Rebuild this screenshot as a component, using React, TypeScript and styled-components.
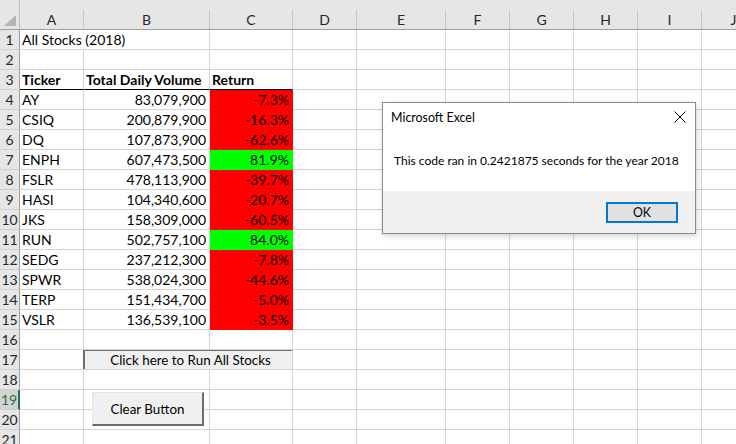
import React from 'react';
import styled, { createGlobalStyle } from 'styled-components';

const GlobalStyle = createGlobalStyle`
  body {
    margin: 0;
    background: #ffffff;
    overflow: hidden;
  }
`;

const CELL_FONT = `'Lato', 'Liberation Sans', sans-serif`;
const UI_FONT = `'Lato', 'Noto Sans', sans-serif`;

const cols = [
  { key: 'A', w: 64 },
  { key: 'B', w: 126 },
  { key: 'C', w: 83 },
  { key: 'D', w: 64 },
  { key: 'E', w: 89 },
  { key: 'F', w: 64 },
  { key: 'G', w: 64 },
  { key: 'H', w: 64 },
  { key: 'I', w: 64 },
  { key: 'J', w: 64 },
];

const stocks = [
  ['AY', '83,079,900', '-7.3%'],
  ['CSIQ', '200,879,900', '-16.3%'],
  ['DQ', '107,873,900', '-62.6%'],
  ['ENPH', '607,473,500', '81.9%'],
  ['FSLR', '478,113,900', '-39.7%'],
  ['HASI', '104,340,600', '-20.7%'],
  ['JKS', '158,309,000', '-60.5%'],
  ['RUN', '502,757,100', '84.0%'],
  ['SEDG', '237,212,300', '-7.8%'],
  ['SPWR', '538,024,300', '-44.6%'],
  ['TERP', '151,434,700', '-5.0%'],
  ['VSLR', '136,539,100', '-3.5%'],
];

const Sheet = styled.div`
  position: relative;
  width: 736px;
  height: 444px;
  overflow: hidden;
  font-family: ${CELL_FONT};
  font-size: 14px;
  color: #000;
`;

const HeaderRow = styled.div`
  display: flex;
  height: 30px;
  padding-top: 10px;
  box-sizing: border-box;
  background: #e6e6e6;
  border-bottom: 1px solid #9f9f9f;
`;

const Corner = styled.div`
  position: relative;
  flex: 0 0 20px;
  box-sizing: border-box;
  border-right: 1px solid #bdbdbd;
  margin-top: -10px;
`;

const CornerTriangle = styled.div`
  position: absolute;
  right: 3px;
  bottom: 3px;
  width: 0;
  height: 0;
  border-left: 12px solid transparent;
  border-bottom: 11px solid #b5b5b5;
`;

const ColHead = styled.div<{ $w: number }>`
  flex: 0 0 ${(p) => p.$w}px;
  min-width: 0;
  box-sizing: border-box;
  border-right: 1px solid #c6c6c6;
  display: flex;
  align-items: center;
  justify-content: center;
  color: #262626;
  font-size: 14px;
`;

const Row = styled.div`
  display: flex;
  height: 20px;
`;

const RowHead = styled.div<{ $active?: boolean }>`
  flex: 0 0 20px;
  box-sizing: border-box;
  background: ${(p) => (p.$active ? '#d2d2d2' : '#e6e6e6')};
  border-right: ${(p) => (p.$active ? '2px solid #217346' : '1px solid #9f9f9f')};
  border-bottom: 1px solid #d0d0d0;
  color: ${(p) => (p.$active ? '#217346' : '#262626')};
  display: flex;
  align-items: flex-end;
  justify-content: center;
  padding-bottom: 1px;
  font-size: 14px;
  line-height: 17px;
`;

const Cell = styled.div<{
  $w: number;
  $fill?: string;
  $right?: boolean;
  $bold?: boolean;
  $underline?: boolean;
  $spill?: boolean;
}>`
  flex: 0 0 ${(p) => p.$w}px;
  min-width: 0;
  position: relative;
  z-index: ${(p) => (p.$spill ? 1 : 0)};
  box-sizing: border-box;
  background: ${(p) => p.$fill || '#ffffff'};
  border-right: 1px solid
    ${(p) => (p.$spill ? '#ffffff' : p.$fill || '#d4d4d4')};
  border-bottom: 1px solid
    ${(p) => (p.$underline ? '#000000' : p.$fill || '#d4d4d4')};
  display: flex;
  align-items: flex-end;
  justify-content: ${(p) => (p.$right ? 'flex-end' : 'flex-start')};
  padding: 0 3px 1px 2px;
  font-weight: ${(p) => (p.$bold ? 700 : 400)};
  white-space: nowrap;
  overflow: visible;
  line-height: 17px;
`;

const RunButton = styled.div`
  position: absolute;
  z-index: 2;
  left: 83px;
  top: 350px;
  width: 209px;
  height: 19px;
  box-sizing: border-box;
  background: #f0f0f0;
  border-top: 1px solid #6d6d6d;
  border-left: 2px solid #6d6d6d;
  display: flex;
  align-items: center;
  justify-content: center;
  font-size: 13.4px;
  padding-left: 4px;
`;

const ClearButton = styled.div`
  position: absolute;
  z-index: 2;
  left: 92px;
  top: 392px;
  width: 112px;
  height: 34px;
  box-sizing: border-box;
  background: #f0f0f0;
  border-top: 1px solid #e3e3e3;
  border-left: 1px solid #e3e3e3;
  border-right: 2px solid #6d6d6d;
  border-bottom: 2px solid #6d6d6d;
  display: flex;
  align-items: center;
  justify-content: center;
  font-size: 13.4px;
`;

const Dialog = styled.div`
  position: absolute;
  z-index: 3;
  left: 382px;
  top: 102px;
  width: 314px;
  height: 132px;
  box-sizing: border-box;
  background: #ffffff;
  border: 1px solid #8a8a8a;
  box-shadow: 1px 2px 6px rgba(0, 0, 0, 0.18);
  display: flex;
  flex-direction: column;
  font-family: ${UI_FONT};
  font-size: 12px;
  color: #000;
`;

const TitleBar = styled.div`
  display: flex;
  align-items: center;
  justify-content: space-between;
  height: 28px;
  padding: 0 8px 0 8px;
`;

const Title = styled.span`
  font-size: 12.4px;
`;

const CloseIcon = styled.svg`
  width: 12px;
  height: 12px;
  margin-right: 1px;
`;

const Message = styled.div`
  flex: 1;
  display: flex;
  align-items: center;
  padding: 0 0 2px 11px;
  font-size: 12px;
`;

const Footer = styled.div`
  height: 42px;
  background: #f0f0f0;
  display: flex;
  align-items: center;
  justify-content: flex-end;
  padding-right: 17px;
`;

const OkButton = styled.div`
  width: 72px;
  height: 21px;
  box-sizing: border-box;
  border: 2px solid #0078d7;
  background: #e1e1e1;
  display: flex;
  align-items: center;
  justify-content: center;
  font-size: 12.4px;
  margin-top: 1px;
`;

const TOTAL_ROWS = 21;

function App() {
  const renderRow = (n: number) => {
    const cells: React.ReactNode[] = cols.map((c) => <Cell key={c.key} $w={c.w} />);
    if (n === 1) {
      cells[0] = (
        <Cell key="A" $w={64} $spill>
          All Stocks (2018)
        </Cell>
      );
    } else if (n === 3) {
      cells[0] = <Cell key="A" $w={64} $bold $underline>Ticker</Cell>;
      cells[1] = <Cell key="B" $w={126} $bold $underline>Total Daily Volume</Cell>;
      cells[2] = <Cell key="C" $w={83} $bold $underline>Return</Cell>;
    } else if (n >= 4 && n <= 15) {
      const [ticker, vol, ret] = stocks[n - 4];
      const up = !ret.startsWith('-');
      cells[0] = <Cell key="A" $w={64}>{ticker}</Cell>;
      cells[1] = <Cell key="B" $w={126} $right>{vol}</Cell>;
      cells[2] = (
        <Cell key="C" $w={83} $right $fill={up ? '#00ff00' : '#ff0000'}>
          {ret}
        </Cell>
      );
    }
    return (
      <Row key={n}>
        <RowHead $active={n === 19}>{n}</RowHead>
        {cells}
      </Row>
    );
  };

  return (
    <>
      <GlobalStyle />
      <Sheet>
        <HeaderRow>
          <Corner>
            <CornerTriangle />
          </Corner>
          {cols.map((c) => (
            <ColHead key={c.key} $w={c.w}>
              {c.key}
            </ColHead>
          ))}
        </HeaderRow>
        {Array.from({ length: TOTAL_ROWS }, (_, i) => renderRow(i + 1))}

        <RunButton>Click here to Run All Stocks</RunButton>
        <ClearButton>Clear Button</ClearButton>

        <Dialog>
          <TitleBar>
            <Title>Microsoft Excel</Title>
            <CloseIcon viewBox="0 0 12 12">
              <path d="M0.5 0.5 L11.5 11.5 M11.5 0.5 L0.5 11.5" stroke="#000" strokeWidth="1" fill="none" />
            </CloseIcon>
          </TitleBar>
          <Message>This code ran in 0.2421875 seconds for the year 2018</Message>
          <Footer>
            <OkButton>OK</OkButton>
          </Footer>
        </Dialog>
      </Sheet>
    </>
  );
}

export default App;
